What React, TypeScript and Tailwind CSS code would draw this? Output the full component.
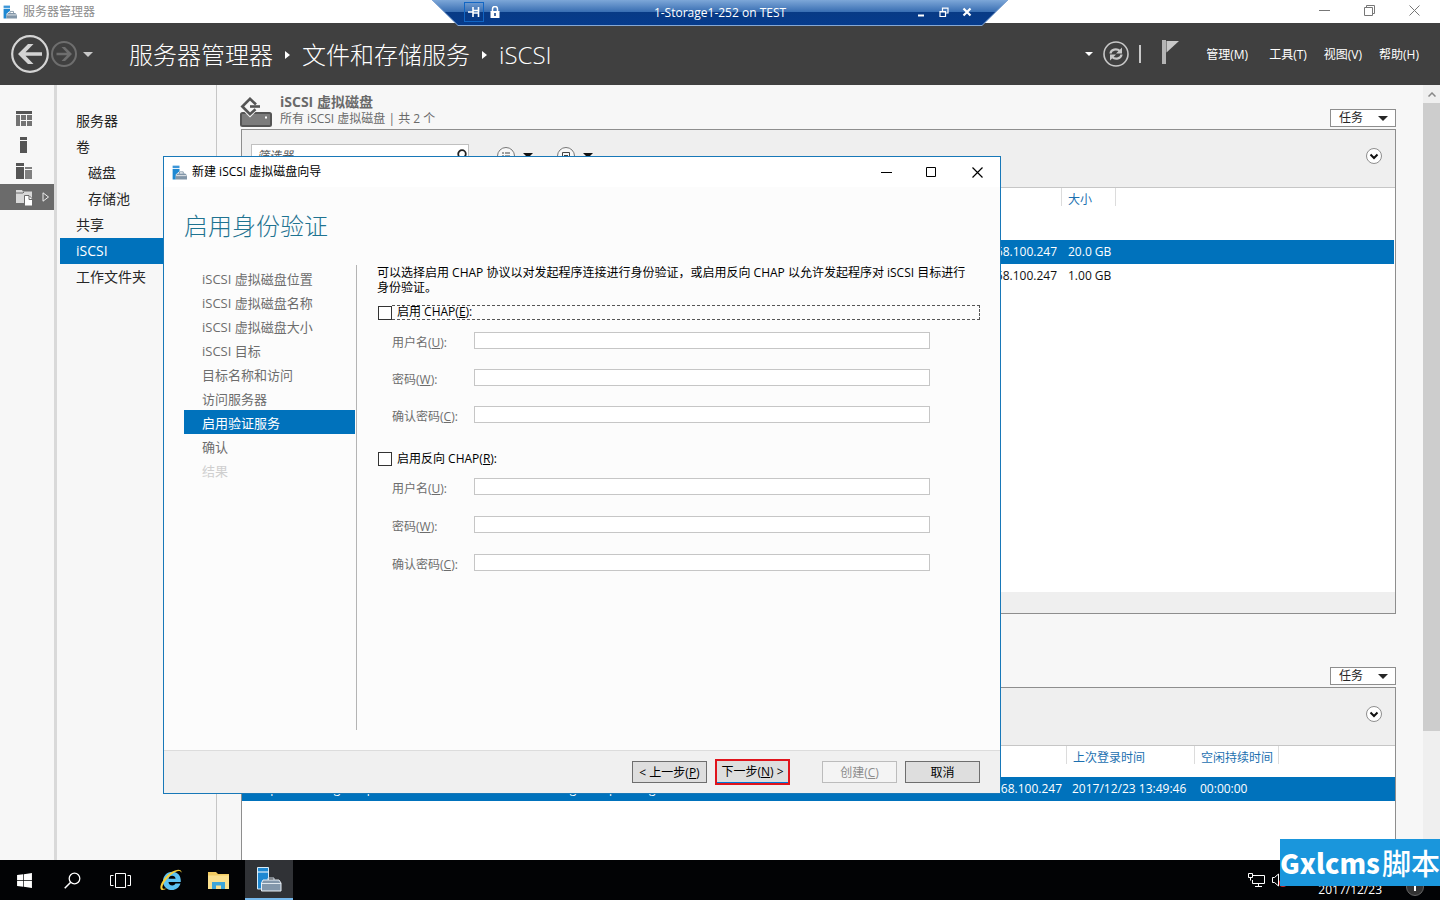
import { ReactNode } from "react";
import { FaWindows } from "react-icons/fa";
import { twMerge } from "tailwind-merge";

const navItems = [
  { label: "服务器", nested: false },
  { label: "卷", nested: false },
  { label: "磁盘", nested: true },
  { label: "存储池", nested: true },
  { label: "共享", nested: false },
  { label: "iSCSI", nested: false, active: true },
  { label: "工作文件夹", nested: false },
];

const steps = [
  "iSCSI 虚拟磁盘位置",
  "iSCSI 虚拟磁盘名称",
  "iSCSI 虚拟磁盘大小",
  "iSCSI 目标",
  "目标名称和访问",
  "访问服务器",
  "启用验证服务",
  "确认",
  "结果",
];

function ServerIcon({ size }: { size: number }) {
  return (
    <svg width={size} height={size} viewBox="0 0 24 24" className="shrink-0">
      <path d="M1 1h11v4H1z" fill="#3c96d8" />
      <path d="M1 6.500h11V10L6 15v8H1z" fill="#1e88d2" />
      <path d="M12 14v-3h6v3" fill="none" stroke="#8296a8" strokeWidth="1.500" />
      <path d="M9 13.500h12l3 3V23H6v-6.500z" fill="#8296a8" />
      <path d="M6.500 17h17" stroke="#fff" strokeWidth="1.200" />
    </svg>
  );
}

function Caret({ className }: { className?: string }) {
  return (
    <svg width="10" height="5" viewBox="0 0 10 5" className={className}>
      <path d="M0 0h10L5 5z" fill="currentColor" />
    </svg>
  );
}

function Crumb() {
  return (
    <svg width="5" height="8" viewBox="0 0 5 8" className="mx-3">
      <path d="M0 0l5 4-5 4z" fill="#fff" />
    </svg>
  );
}

function RemoteBar() {
  return (
    <div className="absolute top-0 left-1/2 -translate-x-1/2 w-[576px] h-[26px] text-white">
      <svg viewBox="0 0 576 26" className="absolute inset-0 w-full h-full">
        <defs>
          <linearGradient id="bar" x1="0" y1="0" x2="0" y2="1">
            <stop offset="0" stopColor="#7da7d8" />
            <stop offset="0.460" stopColor="#3a6fb3" />
            <stop offset="0.470" stopColor="#083a85" />
            <stop offset="1" stopColor="#063b8c" />
          </linearGradient>
        </defs>
        <path d="M0 0h576l-26 25.500H26z" fill="url(#bar)" />
        <path d="M0 0l26 25.500h524L576 0" fill="none" stroke="#86a8d4" />
      </svg>
      <div className="relative flex items-center h-6 px-8 text-[12px]">
        <div className="flex items-center w-24">
          <button aria-label="固定" className="flex items-center justify-center w-5 h-5 border border-[#1266c4]">
            <svg width="12" height="10" viewBox="0 0 12 10">
              <path d="M0 5h5M5 0v10M10.500 0v10M5 3.500h5M5 6h5" stroke="#fff" strokeWidth="1.600" fill="none" />
            </svg>
          </button>
          <svg width="10" height="12" viewBox="0 0 10 12" className="ml-[6px]">
            <path d="M2.500 6V3a2.500 2.500 0 0 1 5 0v3" fill="none" stroke="#fff" strokeWidth="1.500" />
            <path d="M.5 5h9v7h-9z" fill="#fff" />
            <path d="M5 7v3" stroke="#083a85" strokeWidth="1.500" />
          </svg>
        </div>
        <span className="flex-1 pt-0.5 text-center">1-Storage1-252 on TEST</span>
        <div className="flex items-center justify-end gap-[13px] w-24 pr-1">
          <button aria-label="最小化">
            <svg width="10" height="10" viewBox="0 0 10 10">
              <path d="M2 8.500h6" stroke="#fff" strokeWidth="2" />
            </svg>
          </button>
          <button aria-label="还原">
            <svg width="10" height="10" viewBox="0 0 10 10">
              <path d="M1 4.500h5.500v5H1zM1 5h5.500M3.500 4V1h5.500v5H7M3.500 1.200h5.500" fill="none" stroke="#fff" strokeWidth="1.200" />
            </svg>
          </button>
          <button aria-label="关闭">
            <svg width="10" height="10" viewBox="0 0 10 10">
              <path d="M1.500 1.500l7 7M8.500 1.500l-7 7" stroke="#fff" strokeWidth="2.200" />
            </svg>
          </button>
        </div>
      </div>
    </div>
  );
}

function TitleBar() {
  return (
    <div className="flex items-center h-[23px] shrink-0 bg-white text-[#8c8c8c] pl-[3px] pr-5">
      <ServerIcon size={14} />
      <span className="ml-[6px] text-[12px] flex-1">服务器管理器</span>
      <div className="flex items-center gap-[34px] pb-[3px]">
        <button aria-label="最小化窗口">
          <svg width="11" height="11" viewBox="0 0 11 11">
            <path d="M0 5.500h11" stroke="#777" />
          </svg>
        </button>
        <button aria-label="还原窗口">
          <svg width="11" height="11" viewBox="0 0 11 11">
            <path d="M.5 2.500h8v8h-8zM2.500 2V.5h8v8H9" fill="none" stroke="#777" />
          </svg>
        </button>
        <button aria-label="关闭窗口">
          <svg width="11" height="11" viewBox="0 0 11 11">
            <path d="M.5.5l10 10M10.500.5l-10 10" stroke="#777" />
          </svg>
        </button>
      </div>
    </div>
  );
}

function Header() {
  return (
    <header className="flex items-center h-[62px] shrink-0 bg-[#404040] text-white pl-[10px] pr-[21px]">
      <button aria-label="后退">
        <svg width="40" height="40" viewBox="0 0 40 40">
          <circle cx="20" cy="20" r="17.800" fill="none" stroke="#d4d4d4" strokeWidth="2.200" />
          <path d="M8 20L18 10h5.500L15.500 18.200H32v3.600H15.500L23.500 30H18z" fill="#d4d4d4" />
        </svg>
      </button>
      <button aria-label="前进">
        <svg width="28" height="28" viewBox="0 0 28 28">
          <circle cx="14" cy="14" r="12" fill="none" stroke="#6e6e6e" strokeWidth="2" />
          <path d="M22 14l-7-7h-3.500l5.500 5.800H6.500v2.500H17L11.500 21H15z" fill="#6e6e6e" />
        </svg>
      </button>
      <Caret className="ml-[5px] text-[#c8c8c8]" />
      <h1 className="flex items-center ml-9 pt-0.5 text-[24px] font-light whitespace-nowrap">
        服务器管理器
        <Crumb />
        文件和存储服务
        <Crumb />
        iSCSI
      </h1>
      <div className="flex items-center ml-auto">
        <svg width="8" height="4" viewBox="0 0 8 4" className="mr-[10px]">
          <path d="M0 0h8L4 4z" fill="#fff" />
        </svg>
        <button aria-label="刷新">
          <svg width="26" height="26" viewBox="0 0 26 26">
            <circle cx="13" cy="13" r="12" fill="none" stroke="#c8c8c8" strokeWidth="1.600" />
            <path d="M7.500 12.500c.3-4 6-5.500 9.500-2.500M18.500 13.500c-.3 4-6 5.500-9.500 2.500" fill="none" stroke="#c8c8c8" strokeWidth="2.200" />
            <path d="M19 6.500v6h-6zM7 19.500v-6h6z" fill="#c8c8c8" />
          </svg>
        </button>
        <span className="w-[2px] h-[18px] mx-[10px] bg-[#c8c8c8]" />
        <button aria-label="通知" className="ml-[11px] pb-[3px]">
          <svg width="18" height="25" viewBox="0 0 18 25">
            <path d="M0 0h4v24H0z" fill="#b4b4b4" />
            <path d="M4.500 1H17L4.500 12.500z" fill="#c8c8c8" />
          </svg>
        </button>
      </div>
      <nav className="flex items-center gap-[17px] ml-[26px] pt-0.5 text-[12px] whitespace-nowrap">
        <button className="mr-1">管理(M)</button>
        <button>工具(T)</button>
        <button>视图(V)</button>
        <button>帮助(H)</button>
      </nav>
    </header>
  );
}

function Rail() {
  return (
    <div className="w-[57px] shrink-0 border-r-[3px] border-[#d9d9d9] pt-[21px]">
      <button aria-label="仪表板" className="flex items-center h-[26px] pl-4">
        <svg width="16" height="16" viewBox="0 0 16 16">
          <path d="M0 0h16v3H0z" fill="#555" />
          <path d="M0 4h4v11H0zM5 4h5v5H5zM11 4h5v5h-5zM5 10h5v5H5zM11 10h5v5h-5z" fill="#737373" />
        </svg>
      </button>
      <button aria-label="本地服务器" className="flex items-center h-[26px] pl-4">
        <svg width="16" height="16" viewBox="0 0 16 16">
          <path d="M4 0h7v3H4zM4 4h7v12H4z" fill="#555" />
        </svg>
      </button>
      <button aria-label="所有服务器" className="flex items-center h-[26px] pl-4">
        <svg width="16" height="16" viewBox="0 0 16 16">
          <path d="M0 0h8v3H0zM0 4h8v12H0z" fill="#555" />
          <path d="M9 4h7v2H9zM9 7h7v9H9z" fill="#808080" />
        </svg>
      </button>
      <button aria-label="文件和存储服务" className="flex items-center gap-[9px] w-full h-[26px] pl-4 bg-[#6b6b6b]">
        <svg width="17" height="17" viewBox="0 0 17 17">
          <path d="M0 1h6l1 1.500h9V14H0z" fill="#d8d8d8" />
          <path d="M0 4h7l1-1" stroke="#6b6b6b" fill="none" />
          <path d="M8.500 6.500H13l3.500 3.500v7h-8z" fill="#fff" stroke="#6b6b6b" />
          <path d="M13 7v3.500h3.500" fill="none" stroke="#6b6b6b" />
        </svg>
        <svg width="8" height="10" viewBox="0 0 8 10">
          <path d="M1 .8L6.500 5 1 9.200z" fill="none" stroke="#eee" />
        </svg>
      </button>
    </div>
  );
}

function SideNav() {
  return (
    <nav className="w-[160px] shrink-0 border-r border-[#c6c6c6] pt-[23px] pl-[3px] text-[14px]">
      {navItems.map((item) => (
        <a
          key={item.label}
          href="#"
          className={`flex items-center h-[26px] pb-0.5 ${item.nested ? "pl-7" : "pl-4"} ${
            item.active ? "bg-[#0072bc] text-white" : "text-[#262626]"
          }`}
        >
          {item.label}
        </a>
      ))}
    </nav>
  );
}

function TaskButton() {
  return (
    <button className="flex items-center justify-between w-[66px] h-[18px] mt-4 pl-2 pr-[7px] bg-white border border-[#8e8e8e] text-[12px] text-[#262626]">
      任务
      <Caret />
    </button>
  );
}

function ExpandButton() {
  return (
    <button aria-label="展开" className="ml-auto">
      <svg width="16" height="16" viewBox="0 0 16 16">
        <circle cx="8" cy="8" r="7.500" fill="#fff" stroke="#8e8e8e" />
        <path d="M4.500 6.500L8 10l3.500-3.500" fill="none" stroke="#111" strokeWidth="2" />
      </svg>
    </button>
  );
}

function HeadCell({ children }: { children?: ReactNode }) {
  return (
    <th className="p-0 align-top font-normal text-left text-[#1c70b0]">
      <div className="h-[18px] border-l border-[#dcdcdc]" />
      <div className="-mt-[15px] pl-[7px]">{children}</div>
    </th>
  );
}

function DiskPanel() {
  return (
    <section>
      <div className="flex items-start h-11 pt-2">
        <svg width="33" height="32" viewBox="0 0 33 32" className="mt-1 -ml-px">
          <rect x="1" y="16" width="30" height="13" rx="1.500" fill="#7c7c7c" stroke="#555" strokeWidth="2" />
          <path d="M25 19.500h2v2h-2z" fill="#fff" />
          <path d="M10 20.500L18 12.500H2z" fill="#f7f7f7" />
          <path d="M16 7.500L10 1.800 2.300 9.500 10 17.200l5.500-5" fill="none" stroke="#555" strokeWidth="2.600" />
          <path d="M10 9.500h10" fill="none" stroke="#555" strokeWidth="2.600" />
        </svg>
        <div className="ml-[7px] flex-1 text-[#6a6a6a] whitespace-nowrap">
          <h2 className="text-[14px] leading-[18px] font-bold">iSCSI 虚拟磁盘</h2>
          <p className="text-[12px] leading-[15px]">所有 iSCSI 虚拟磁盘 | 共 2 个</p>
        </div>
        <TaskButton />
      </div>
      <div className="border border-[#8e8e8e] bg-white">
        <div className="flex items-center h-[58px] pl-[9px] pr-[13px] pb-[6px] bg-[#efefef] border-b border-[#c6c6c6]">
          <div className="relative flex items-center">
            <input
              aria-label="筛选器"
              placeholder="筛选器"
              className="w-[218px] h-6 px-[5px] bg-white border border-[#c0c0c0] text-[12px] placeholder:italic placeholder:text-[#555]"
            />
            <svg width="12" height="14" viewBox="0 0 12 14" className="absolute right-[2px]">
              <circle cx="7" cy="5" r="3.800" fill="none" stroke="#222" strokeWidth="1.800" />
              <path d="M4.500 8L1 12.500" stroke="#222" strokeWidth="2" />
            </svg>
          </div>
          <svg width="18" height="18" viewBox="0 0 18 18" className="ml-7">
            <circle cx="9" cy="9" r="8.500" fill="#f7f7f7" stroke="#777" />
            <path d="M5 6h2M8 6h5M5 9h2M8 9h5M5 12h2M8 12h5" stroke="#444" />
          </svg>
          <Caret className="ml-2" />
          <svg width="18" height="18" viewBox="0 0 18 18" className="ml-6">
            <circle cx="9" cy="9" r="8.500" fill="#f7f7f7" stroke="#777" />
            <path d="M5.500 5.500h7v7h-7zM7 8.500h4" fill="none" stroke="#444" />
          </svg>
          <Caret className="ml-2" />
          <ExpandButton />
        </div>
        <div className="h-[404px] pr-px">
          <table className="w-full table-fixed border-collapse text-[12px]">
            <colgroup>
              <col />
              <col className="w-[54px]" />
              <col className="w-[279px]" />
            </colgroup>
            <thead>
              <tr className="h-[52px]">
                <HeadCell />
                <HeadCell>大小</HeadCell>
                <HeadCell />
              </tr>
            </thead>
            <tbody>
              <tr className="h-6 bg-[#0072bc] text-white whitespace-nowrap">
                <td className="p-0 pr-1 text-right">192.168.100.247</td>
                <td className="p-0 pl-[7px]">20.0 GB</td>
                <td />
              </tr>
              <tr className="h-6 whitespace-nowrap">
                <td className="p-0 pr-1 text-right">192.168.100.247</td>
                <td className="p-0 pl-[7px]">1.00 GB</td>
                <td />
              </tr>
            </tbody>
          </table>
        </div>
        <div className="h-[21px] bg-[#efefef]" />
      </div>
    </section>
  );
}

function TargetPanel() {
  return (
    <section className="flex flex-col flex-1 mt-7">
      <div className="flex items-start justify-end h-[45px] pt-[9px]">
        <TaskButton />
      </div>
      <div className="flex-1 border border-b-0 border-[#8e8e8e] bg-white">
        <div className="flex items-center h-[58px] pr-[13px] pb-[6px] bg-[#efefef] border-b border-[#c6c6c6]">
          <ExpandButton />
        </div>
        <table className="w-full table-fixed border-collapse text-[12px]">
          <colgroup>
            <col className="w-[293px]" />
            <col className="w-[300px]" />
            <col />
            <col className="w-[128px]" />
            <col className="w-[84px]" />
            <col className="w-[117px]" />
          </colgroup>
          <thead>
            <tr className="h-[31px] whitespace-nowrap">
              <HeadCell />
              <HeadCell />
              <HeadCell />
              <HeadCell>上次登录时间</HeadCell>
              <HeadCell>空闲持续时间</HeadCell>
              <HeadCell />
            </tr>
          </thead>
          <tbody>
            <tr className="h-6 bg-[#0072bc] text-white whitespace-nowrap">
              <td className="p-0 pl-[6px]">temp-win-storage-disp</td>
              <td className="p-0 pl-[6px]">storage-vdisp-storage</td>
              <td className="p-0 pr-1 text-right">192.168.100.247</td>
              <td className="p-0 pl-[6px]">2017/12/23 13:49:46</td>
              <td className="p-0 pl-[6px]">00:00:00</td>
              <td />
            </tr>
          </tbody>
        </table>
      </div>
    </section>
  );
}

function ScrollBar() {
  return (
    <div className="flex flex-col w-[17px] shrink-0 bg-[#efefef]">
      <div className="flex items-center justify-center h-[18px]">
        <svg width="8" height="5" viewBox="0 0 8 5">
          <path d="M.5 4.500L4 1l3.500 3.500" fill="none" stroke="#888" strokeWidth="1.500" />
        </svg>
      </div>
      <div className="h-[81%] bg-[#cdcdcd]" />
    </div>
  );
}

function Field({ id, label, mnemonic, gap }: { id: string; label: string; mnemonic: string; gap: string }) {
  return (
    <div className={`flex items-start ${gap}`}>
      <label htmlFor={id} className="w-[82px] pt-[2px] leading-[18px] text-[#6d6d6d]">
        {label}(<u>{mnemonic}</u>):
      </label>
      <input
        id={id}
        type={mnemonic === "U" ? "text" : "password"}
        disabled
        className="w-[456px] h-[17px] px-1 bg-white border border-[#c6c6c6]"
      />
    </div>
  );
}

function WizardButton({ children, className }: { children: ReactNode; className?: string }) {
  return (
    <button
      className={twMerge(
        "w-[75px] h-[22px] bg-[#dedede] border border-[#6e6e6e] whitespace-nowrap leading-[22px]",
        className
      )}
    >
      {children}
    </button>
  );
}

function Wizard() {
  return (
    <div
      role="dialog"
      aria-label="新建 iSCSI 虚拟磁盘向导"
      className="absolute left-[163px] top-[156px] w-[838px] bg-[#fcfcfc] border border-[#1878b8] text-[12px] text-black"
    >
      <div className="flex items-center h-[30px] pl-2 bg-white">
        <ServerIcon size={15} />
        <span className="ml-[5px] flex-1">新建 iSCSI 虚拟磁盘向导</span>
        <button aria-label="最小化向导" className="flex justify-center w-[45px]">
          <svg width="11" height="11" viewBox="0 0 11 11">
            <path d="M0 5.500h11" stroke="#000" />
          </svg>
        </button>
        <button aria-label="最大化向导" className="flex justify-center w-[45px]">
          <svg width="11" height="11" viewBox="0 0 11 11">
            <path d="M.5.5h9v9h-9z" fill="none" stroke="#000" />
          </svg>
        </button>
        <button aria-label="关闭向导" className="flex justify-center w-[46px]">
          <svg width="11" height="11" viewBox="0 0 11 11">
            <path d="M.5.5l10 10M10.500.5l-10 10" stroke="#000" strokeWidth="1.200" />
          </svg>
        </button>
      </div>
      <h2 className="mt-[21px] ml-5 text-[24px] leading-9 font-light text-[#1f7391]">启用身份验证</h2>
      <div className="flex mt-[21px] mx-5 mb-5">
        <ol className="w-[173px] h-[465px] pt-px pr-px border-r border-[#b4b4b4] text-[13px]">
          {steps.map((step, i) => (
            <li
              key={step}
              className={`h-6 leading-[26px] pl-[18px] ${
                i === 6 ? "bg-[#0072bc] text-white" : i === 8 ? "text-[#cfcfcf]" : "text-[#6d6d6d]"
              }`}
            >
              {step}
            </li>
          ))}
        </ol>
        <div className="flex-1 ml-5">
          <p className="leading-[15px] whitespace-nowrap">
            可以选择启用 CHAP 协议以对发起程序连接进行身份验证，或启用反向 CHAP 以允许发起程序对 iSCSI 目标进行
            <br />
            身份验证。
          </p>
          <div className="flex items-center h-[15px] mt-[10px]">
            <input id="chap" type="checkbox" className="appearance-none w-[14px] h-[14px] ml-px bg-white border border-[#333]" />
            <label
              htmlFor="chap"
              className="flex-1 h-[15px] pl-[5px] leading-[12px] border border-l-0 border-dashed border-[#555]"
            >
              启用 CHAP(<u>E</u>):
            </label>
          </div>
          <div className="pt-3 pl-[15px]">
            <Field id="user" label="用户名" mnemonic="U" gap="mb-[17px]" />
            <Field id="pass" label="密码" mnemonic="W" gap="mb-[17px]" />
            <Field id="confirm" label="确认密码" mnemonic="C" gap="mb-[25px]" />
          </div>
          <div className="flex items-center h-[15px]">
            <input id="rchap" type="checkbox" className="appearance-none w-[14px] h-[14px] ml-px bg-white border border-[#333]" />
            <label htmlFor="rchap" className="pl-[5px] leading-[15px]">
              启用反向 CHAP(<u>R</u>):
            </label>
          </div>
          <div className="pt-3 pl-[15px]">
            <Field id="ruser" label="用户名" mnemonic="U" gap="mb-[18px]" />
            <Field id="rpass" label="密码" mnemonic="W" gap="mb-[18px]" />
            <Field id="rconfirm" label="确认密码" mnemonic="C" gap="mb-0" />
          </div>
        </div>
      </div>
      <div className="flex items-center justify-end h-[43px] pr-5 bg-[#f0f0f0] border-t border-[#dcdcdc]">
        <WizardButton>
          &lt; 上一步(<u>P</u>)
        </WizardButton>
        <WizardButton className="ml-2 h-[26px] border-2 border-[#e0141c] shadow-[inset_0_-1px_0_#0078d7]">
          下一步(<u>N</u>) &gt;
        </WizardButton>
        <WizardButton className="ml-8 bg-[#f4f4f4] border-[#bcbcbc] text-[#8c8c8c]">
          创建(<u>C</u>)
        </WizardButton>
        <WizardButton className="ml-2">取消</WizardButton>
      </div>
    </div>
  );
}

function TaskBar() {
  return (
    <footer className="flex items-center h-10 shrink-0 bg-[#020305] text-white">
      <button aria-label="开始" className="flex justify-center w-12">
        <FaWindows size={17} />
      </button>
      <button aria-label="搜索" className="flex justify-center w-12">
        <svg width="17" height="17" viewBox="0 0 17 17">
          <circle cx="10.500" cy="6.500" r="5.300" fill="none" stroke="#fff" strokeWidth="1.300" />
          <path d="M6.700 10.300L.7 16.300" stroke="#fff" strokeWidth="1.500" />
        </svg>
      </button>
      <button aria-label="任务视图" className="flex justify-center w-12">
        <svg width="21" height="15" viewBox="0 0 21 15">
          <path d="M5.500.5h10v14h-10zM3.500 2.500h-3v10h3M17.500 2.500h3v10h-3" fill="none" stroke="#fff" />
        </svg>
      </button>
      <button aria-label="Internet Explorer" className="flex justify-center w-[53px]">
        <svg width="24" height="24" viewBox="0 0 24 24">
          <path d="M21.500 15.500c-1.400 4.300-4.600 6.500-8.500 6.500-5.300 0-9-3.800-9-8.800C4 8 8 3.800 13.200 3.800c5.600 0 9 4.200 8.600 10.200H9.500c.2 2.200 1.600 3.500 3.800 3.500 1.500 0 2.600-.7 3.200-2zM9.600 10.800h7c-.2-2-1.500-3.100-3.400-3.100s-3.300 1.200-3.600 3.100z" fill="#5cc3f2" />
          <path d="M22.500 5C23 1 18 .5 12 4.500 5 9 .5 17 1.500 20.500c.8 2.500 4 1.500 7-.5-2.500 1-4.500 1.300-5 0C2.800 17.500 7 11 12.500 6.500 17 3 21.500 1.500 22.500 5z" fill="#f6cf3c" />
        </svg>
      </button>
      <button aria-label="文件资源管理器" className="flex justify-center w-11">
        <svg width="22" height="19" viewBox="0 0 22 19">
          <path d="M0 1h8l2 2h11v15H0z" fill="#f2cb62" />
          <path d="M0 4.500h21V18H0z" fill="#fbe08e" />
          <path d="M4 18v-7h13v7h-4v-3.500H8V18z" fill="#3ea5d8" />
        </svg>
      </button>
      <button
        aria-label="服务器管理器"
        className="flex items-center justify-center w-12 h-10 ml-1 bg-[#303236] border-b-2 border-[#76b9ed]"
      >
        <svg width="25" height="25" viewBox="0 0 25 25">
          <path d="M.5.500h11V22H.5z" fill="#1e88d2" stroke="#d8ecfa" />
          <path d="M.5 5h11" stroke="#fff" />
          <path d="M11 13v-2h6v2" fill="none" stroke="#cfd8e2" />
          <path d="M6 13h16l2 3v8H4.500v-8z" fill="#8397ab" stroke="#e8eef4" />
          <path d="M5 16.500h19" stroke="#dfe7ee" />
        </svg>
      </button>
      <div className="flex items-center h-10 ml-auto pr-4">
        <svg width="17" height="14" viewBox="0 0 17 14">
          <path d="M5 2.500h11.500v8H4.500V7M10.500 10.500v3M7 13.500h7M.5.500h4v4h-4zM2.500 4.500v3" fill="none" stroke="#fff" />
        </svg>
        <svg width="14" height="14" viewBox="0 0 14 14" className="ml-[7px]">
          <path d="M.5 4.500h2l4-3.500v12l-4-3.500h-2z" fill="none" stroke="#fff" />
          <circle cx="11" cy="10" r="4" fill="#d02828" />
        </svg>
        <span className="self-end ml-8 text-[12px] leading-5">2017/12/23</span>
        <svg width="18" height="18" viewBox="0 0 18 18" className="self-end ml-6 mb-1">
          <circle cx="9" cy="9" r="8.500" fill="#333" stroke="#666" />
          <path d="M9 4v9M7 5.500L9 4" stroke="#fff" strokeWidth="2" />
        </svg>
      </div>
    </footer>
  );
}

export default function App() {
  return (
    <div className="relative flex flex-col h-screen overflow-hidden bg-[#f7f7f7] text-[#111] font-['Open_Sans','Noto_Sans_CJK_SC',sans-serif]">
      <TitleBar />
      <Header />
      <div className="flex flex-1 min-h-0">
        <Rail />
        <SideNav />
        <main className="flex flex-col flex-1 min-w-0 overflow-hidden pl-6 pr-[27px]">
          <DiskPanel />
          <TargetPanel />
        </main>
        <ScrollBar />
      </div>
      <TaskBar />
      <RemoteBar />
      <Wizard />
      <div className="absolute right-0 bottom-[14px] flex items-center justify-between w-[160px] h-[47px] leading-[47px] whitespace-nowrap bg-[#1a96dc] text-white font-['Noto_Sans_CJK_SC',sans-serif]">
        <span className="text-[27px] font-black">Gxlcms</span>
        <span className="text-[29px] font-medium">脚本</span>
      </div>
    </div>
  );
}
